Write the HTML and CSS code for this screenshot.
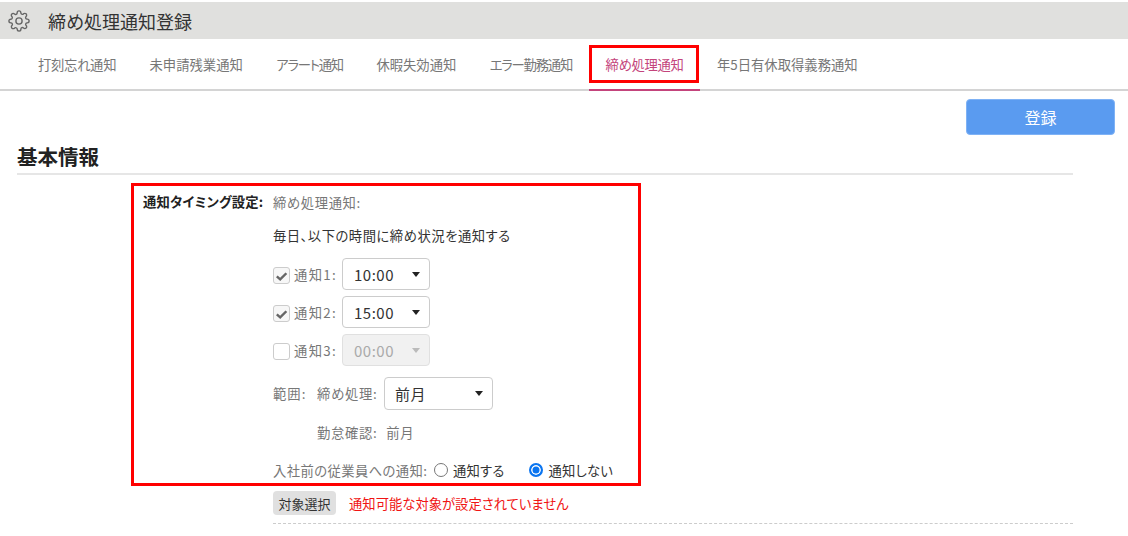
FILE: index.html
```html
<!DOCTYPE html>
<html lang="ja">
<head>
  <meta charset="UTF-8">
  <title>締め処理通知登録</title>
  <link rel="stylesheet" href="styles.css">
</head>
<body>
<header class="page-header">
  <svg class="gear" viewBox="0 0 24 24" fill="none" stroke="#666" stroke-width="1.5" stroke-linejoin="round">
    <circle cx="12" cy="12" r="3.4"></circle>
    <path d="M19.4 15a1.65 1.65 0 0 0 .33 1.82l.06.06a2 2 0 0 1 0 2.83 2 2 0 0 1-2.83 0l-.06-.06a1.65 1.65 0 0 0-1.82-.33 1.65 1.65 0 0 0-1 1.51V21a2 2 0 0 1-2 2 2 2 0 0 1-2-2v-.09A1.65 1.65 0 0 0 9 19.4a1.65 1.65 0 0 0-1.82.33l-.06.06a2 2 0 0 1-2.83 0 2 2 0 0 1 0-2.83l.06-.06a1.65 1.65 0 0 0 .33-1.82 1.65 1.65 0 0 0-1.51-1H3a2 2 0 0 1-2-2 2 2 0 0 1 2-2h.09A1.65 1.65 0 0 0 4.6 9a1.65 1.65 0 0 0-.33-1.82l-.06-.06a2 2 0 0 1 0-2.83 2 2 0 0 1 2.83 0l.06.06a1.65 1.65 0 0 0 1.82.33H9a1.65 1.65 0 0 0 1-1.51V3a2 2 0 0 1 2-2 2 2 0 0 1 2 2v.09a1.65 1.65 0 0 0 1 1.51 1.65 1.65 0 0 0 1.82-.33l.06-.06a2 2 0 0 1 2.83 0 2 2 0 0 1 0 2.83l-.06.06a1.65 1.65 0 0 0-.33 1.82V9a1.65 1.65 0 0 0 1.51 1H21a2 2 0 0 1 2 2 2 2 0 0 1-2 2h-.09a1.65 1.65 0 0 0-1.51 1z"></path>
  </svg>
  <h1>締め処理通知登録</h1>
</header>

<nav class="tabs">
  <a class="tab tight">打刻忘れ通知</a>
  <a class="tab">未申請残業通知</a>
  <a class="tab kana">アラート通知</a>
  <a class="tab">休暇失効通知</a>
  <a class="tab kana">エラー勤務通知</a>
  <a class="tab tight active">締め処理通知<span class="mark mark-tab"></span></a>
  <a class="tab">年5日有休取得義務通知</a>
</nav>

<div class="toolbar">
  <button class="btn-save">登録</button>
</div>

<h2 class="section-title">基本情報</h2>

<div class="form">
  <span class="mark mark-form"></span>
  <div class="form-label">通知タイミング設定:</div>
  <div class="form-body">
    <div class="row row-head">締め処理通知:</div>
    <div class="row row-lead">毎日、以下の時間に締め状況を通知する</div>

    <div class="row row-time">
      <span class="check on"><svg viewBox="0 0 16 16"><path d="M3 9l3.6 3.2L13.2 5.6" fill="none" stroke="#666" stroke-width="2.6"></path></svg></span>
      <span class="opt-label time-label">通知1:</span>
      <div class="select"><span>10:00</span><i class="arrow"></i></div>
    </div>
    <div class="row row-time">
      <span class="check on"><svg viewBox="0 0 16 16"><path d="M3 9l3.6 3.2L13.2 5.6" fill="none" stroke="#666" stroke-width="2.6"></path></svg></span>
      <span class="opt-label time-label">通知2:</span>
      <div class="select"><span>15:00</span><i class="arrow"></i></div>
    </div>
    <div class="row row-time">
      <span class="check"></span>
      <span class="opt-label time-label">通知3:</span>
      <div class="select disabled"><span>00:00</span><i class="arrow"></i></div>
    </div>

    <div class="row row-range">
      <span class="range-label">範囲:</span>
      <span class="opt-label close-label">締め処理:</span>
      <div class="select wide"><span>前月</span><i class="arrow"></i></div>
    </div>
    <div class="row row-attend">勤怠確認: 前月</div>

    <div class="row row-hire">
      <span class="opt-label hire-label">入社前の従業員への通知:</span>
      <span class="radio"></span><span class="radio-text">通知する</span>
      <span class="radio on"></span><span class="radio-text">通知しない</span>
    </div>

    <div class="row row-target">
      <button class="btn-target">対象選択</button>
      <span class="error">通知可能な対象が設定されていません</span>
    </div>
    <div class="dashed"></div>
  </div>
</div>
</body>
</html>
```

FILE: styles.css
```css
* {
  box-sizing: border-box;
}

body {
  margin: 0;
  padding-top: 2px;
  font-family: "Noto Sans CJK JP", "Noto Sans", sans-serif;
  font-size: 13.33px;
  font-feature-settings: "palt";
  color: #333;
  background: #fff;
  overflow: hidden;
}

.page-header {
  display: flex;
  align-items: center;
  height: 37px;
  padding-left: 8px;
  background: #e0e0de;
}

.gear {
  width: 22px;
  height: 22px;
}

.page-header h1 {
  margin: 0 0 0 18px;
  font-size: 18px;
  font-weight: 400;
  color: #333;
}

.tabs {
  display: flex;
  height: 52px;
  padding-left: 21.3px;
  border-bottom: 2px solid #d4d4d4;
}

.tab {
  position: relative;
  height: 52px;
  padding: 0 16.7px;
  line-height: 52px;
  color: #777;
  white-space: nowrap;
}

.tab.tight {
  letter-spacing: -0.3px;
}

.tab.kana {
  letter-spacing: -1.2px;
}

.tab.active {
  color: #c4447c;
  border-bottom: 2px solid #c4447c;
}

/* 赤枠 */
.mark {
  position: absolute;
  border: 3px solid #f00;
  pointer-events: none;
}

.mark-tab {
  left: 0;
  top: 6px;
  width: 110px;
  height: 38px;
}

.mark-form {
  left: 131px;
  top: -9px;
  width: 510px;
  height: 303px;
}

.toolbar {
  display: flex;
  justify-content: flex-end;
  padding: 8px 13px 0 0;
}

.btn-save {
  width: 149px;
  height: 36px;
  border: 1px solid #7fb2f5;
  border-radius: 4px;
  background: #5a9bf0;
  color: #fff;
  font-family: inherit;
  font-size: 16px;
}

.section-title {
  width: 1056px;
  height: 31px;
  margin: 9px 0 0 17px;
  border-bottom: 2px solid #e6e6e6;
  font-size: 20.5px;
  line-height: 24px;
  font-weight: 700;
  color: #222;
}

.form {
  position: relative;
  display: flex;
  width: 1073px;
  margin-top: 17px;
  padding-left: 143px;
}

.form-label {
  width: 120px;
  margin-right: 10px;
  font-weight: 700;
  font-size: 13.33px;
  line-height: 20px;
  letter-spacing: 0.2px;
  color: #222;
  white-space: nowrap;
}

.form-body {
  flex: 1;
  color: #777;
}

.row {
  display: flex;
  align-items: center;
}

.row-head {
  height: 20px;
  letter-spacing: 0.6px;
}

.row-lead {
  height: 20px;
  margin-top: 13px;
  letter-spacing: 0.5px;
  color: #333;
}

.row-time {
  height: 32px;
  margin-bottom: 6px;
}

.row-lead + .row-time {
  margin-top: 13px;
}

.check {
  display: flex;
  align-items: center;
  justify-content: center;
  width: 17px;
  height: 17px;
  margin-top: 2px;
  margin-right: 4px;
  border: 1px solid #ccc;
  border-radius: 3px;
  background: #fff;
}

.check.on {
  background: #f7f7f7;
}

.check svg {
  width: 15px;
  height: 15px;
}

.opt-label {
  white-space: nowrap;
}

.time-label {
  width: 43px;
  letter-spacing: 1.3px;
}

.close-label {
  width: 62px;
  letter-spacing: 0.7px;
}

.hire-label {
  width: 156px;
  letter-spacing: 0.4px;
}

.select {
  display: flex;
  align-items: center;
  justify-content: space-between;
  width: 88px;
  height: 100%;
  margin-left: 5px;
  padding: 0 9px 0 11px;
  border: 1px solid #ccc;
  border-radius: 4px;
  background: #fff;
  color: #333;
  font-size: 15px;
  letter-spacing: 0.5px;
}

.select.wide {
  width: 109px;
  margin-left: 5px;
  padding-left: 10px;
}

.select.disabled {
  background: #f1f1f1;
  border-color: #e0e0e0;
  color: #aaa;
}

.arrow {
  width: 0;
  height: 0;
  border-left: 4px solid transparent;
  border-right: 4px solid transparent;
  border-top: 5px solid #222;
}

.disabled .arrow {
  border-top-color: #bbb;
}

.row-range {
  height: 33px;
  margin-top: 11px;
}

.range-label {
  width: 44px;
  letter-spacing: 1px;
}

.row-attend {
  height: 20px;
  margin-top: 12px;
  padding-left: 44px;
  letter-spacing: 0.7px;
  word-spacing: 5px;
}

.row-hire {
  height: 20px;
  margin-top: 18px;
}

.radio {
  width: 14px;
  height: 14px;
  margin-left: 5px;
  border: 1px solid #777;
  border-radius: 50%;
  background: #fff;
}

.radio.on {
  margin-left: 25px;
  border: 2px solid #0a75f0;
  box-shadow: inset 0 0 0 1.5px #fff;
  background: #0a75f0;
}

.radio-text {
  margin-left: 5px;
  letter-spacing: 0.2px;
  color: #333;
  white-space: nowrap;
}

.row-target {
  height: 24px;
  margin-top: 11px;
}

.btn-target {
  width: 63px;
  height: 24px;
  padding: 0;
  border: none;
  border-radius: 4px;
  background: #e0e0e0;
  color: #333;
  font-family: inherit;
  font-size: 13px;
}

.error {
  margin-left: 13px;
  color: #f01414;
}

.dashed {
  margin-top: 8px;
  border-top: 1px dashed #ccc;
}
```
